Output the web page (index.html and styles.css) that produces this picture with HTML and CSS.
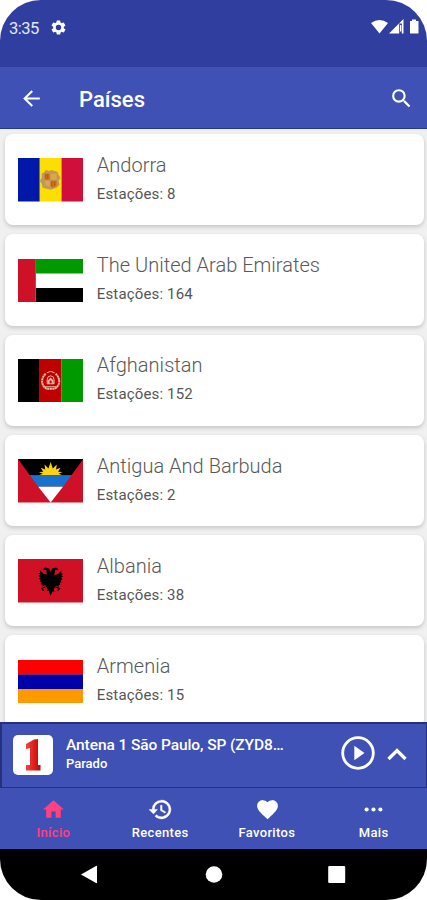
FILE: index.html
```html
<!DOCTYPE html>
<html lang="pt">
<head>
<meta charset="utf-8">
<title>Países</title>
<link rel="stylesheet" href="styles.css">
</head>
<body>
<div class="phone">
  <div class="status">
    <span class="time">3:35</span>
    <svg class="gear" viewBox="0 0 24 24"><path fill-rule="evenodd" d="M19.4 13a7.500 7.500 0 0 0 0-2l2.100-1.600a.5.5 0 0 0 .1-.6l-2-3.500a.5.5 0 0 0-.6-.2l-2.500 1a7.300 7.300 0 0 0-1.700-1l-.4-2.600a.5.500 0 0 0-.5-.5h-4a.5.500 0 0 0-.5.500L9.100 5.100a7.300 7.300 0 0 0-1.700 1l-2.500-1a.5.500 0 0 0-.6.200l-2 3.500a.5.500 0 0 0 .1.600L4.500 11a7.500 7.500 0 0 0 0 2l-2.100 1.600a.5.500 0 0 0-.1.600l2 3.500c.1.200.4.300.6.200l2.500-1a7.300 7.300 0 0 0 1.700 1l.4 2.600c0 .3.200.5.500.5h4c.3 0 .5-.2.500-.5l.4-2.600a7.300 7.300 0 0 0 1.700-1l2.500 1c.2.100.5 0 .6-.2l2-3.500a.5.500 0 0 0-.1-.6ZM12 15.800a3.800 3.800 0 1 1 0-7.600 3.800 3.800 0 0 1 0 7.600Z"/></svg>
    <svg class="signals" viewBox="0 0 50 16"><path d="M0 4Q8.500-2 17 4L8.500 14.500Z"/><path d="M18 14.500 32.500 0v14.500h-1.700V4.500h-2.600v10Z"/><path d="M29 6h1.300v6.500H29Z"/><path d="M39 2h2V.5h4V2h2.500v12.500H39Z"/></svg>
  </div>
  <header class="appbar">
    <svg class="back" viewBox="0 0 24 24"><path d="M20 11H7.830l5.590-5.590L12 4l-8 8 8 8 1.410-1.410L7.830 13H20Z"/></svg>
    <h1>Países</h1>
    <svg class="search" viewBox="0 0 24 24"><path d="M15.500 14h-.79l-.28-.27A6.471 6.471 0 0 0 16 9.500 6.500 6.500 0 1 0 9.500 16c1.610 0 3.090-.59 4.230-1.570l.27.28v.79l5 4.990L20.490 19Zm-6 0a4.500 4.500 0 1 1 0-9 4.500 4.500 0 0 1 0 9Z"/></svg>
  </header>
  <main class="list">
    <article class="card">
      <svg class="flag" viewBox="0 0 66 44" preserveAspectRatio="none"><path fill="#0018a8" d="M0 0h22v44H0z"/><path fill="#fedd00" d="M22 0h22v44H22z"/><path fill="#d0103a" d="M44 0h22v44H44z"/><path fill="#bd9a58" d="m24 16 3-2 1-2 4 1 2-1 3 1 3 1 1 3 2 3-2 3 1 4-3 3-3 1-3 1-4-1-4-1-1-4-2-3 2-3z"/><path fill="#d46b16" d="M27 16h5v6h-5zM33 23h6v5l-4 2-2-2z"/><path fill="#e0a34e" d="M33 16h6v6h-6zM27 23h5v6l-4-2z"/><path fill="none" stroke="#c7501c" d="M28 16v5M30 16v5M34 24v5M37 24v4"/></svg>
      <div><h2>Andorra</h2><p>Estações: 8</p></div>
    </article>
    <article class="card">
      <svg class="flag" viewBox="0 0 66 44" preserveAspectRatio="none"><path fill="#fff" d="M0 0h66v44H0z"/><path fill="#009a00" d="M18 0h48v14.600H18z"/><path d="M18 29.300h48V44H18z"/><path fill="#ce1126" d="M0 0h18v44H0z"/></svg>
      <div><h2>The United Arab Emirates</h2><p>Estações: 164</p></div>
    </article>
    <article class="card">
      <svg class="flag" viewBox="0 0 66 44" preserveAspectRatio="none"><path d="M0 0h22v44H0z"/><path fill="#bf0000" d="M22 0h22v44H22z"/><path fill="#090" d="M44 0h22v44H44z"/><g fill="none" stroke="#eab9a4"><path stroke-width="2" stroke-dasharray="2.200 .4" d="M28 15c-5 4-5 12 1 15h8c6-3 6-11 1-15"/><path d="M27 28h12M29 14q4-3 8 0M29.500 25v-4q0-4 3.500-4t3.500 4v4z"/><path stroke-width="2" d="M31 25v-3l2-2 2 2v3"/></g></svg>
      <div><h2>Afghanistan</h2><p>Estações: 152</p></div>
    </article>
    <article class="card">
      <svg class="flag" viewBox="0 0 66 44" preserveAspectRatio="none"><path fill="#ce1126" d="M0 0h66v44H0z"/><path d="M0 0h66L54 16.500H12z"/><path fill="#fcd116" d="m21 16.500 4-1.500-4-2 4.500-.2-2.500-4 4.500 1.800-.7-5 4 4L33 3l2.200 6.600 4-4-.7 5L43 8.800l-2.500 4 4.500.2-4 2 4 1.500z"/><path fill="#1672ce" d="M12 16.500h42L45.500 28h-25z"/><path fill="#fff" d="M20.500 28h25L33 44z"/></svg>
      <div><h2>Antigua And Barbuda</h2><p>Estações: 2</p></div>
    </article>
    <article class="card">
      <svg class="flag" viewBox="0 0 66 44" preserveAspectRatio="none"><path fill="#d01024" d="M0 0h66v44H0z"/><path d="m33 13-1.500-3.500-4-1-2.500 2 3.500.5.500 4 1.500 3L33 20l2.500-2 1.500-3 .5-4 3.500-.5-2.500-2-4 1zM30 16l-4-1-4-4 .5 3-2 .3 2 1.700-2 1 2 1.500-1.500 1.500 2 1-1 2 2 .5-1 2 2 .2-.5 2 3-1.500 1 2 1.500 1.800-1 2.500 2-.5L33 37l2-4.500 2 .5-1-2.500 1.500-1.800 1-2 3 1.500-.5-2 2-.2-1-2 2-.5-1-2 2-1-1.500-1.500 2-1.500-2-1 2-1.700-2-.3.500-3-4 4-4 1-3 3z"/><path fill="none" stroke="#000" stroke-width="1.200" d="m28 28-4 2 2 2M38 28l4 2-2 2"/></svg>
      <div><h2>Albania</h2><p>Estações: 38</p></div>
    </article>
    <article class="card">
      <svg class="flag" viewBox="0 0 66 44" preserveAspectRatio="none"><path fill="#f00" d="M0 0h66v15H0z"/><path fill="#0000a8" d="M0 14.600h66v15H0z"/><path fill="#ff9900" d="M0 29.300h66V44H0z"/></svg>
      <div><h2>Armenia</h2><p>Estações: 15</p></div>
    </article>
  </main>
  <section class="player">
    <div class="cover"><svg viewBox="0 0 40 40"><defs><linearGradient id="red" x1="0" x2="1"><stop offset="0" stop-color="#f0443c"/><stop offset=".6" stop-color="#dc1c1c"/><stop offset="1" stop-color="#a90f14"/></linearGradient></defs><path fill="url(#red)" d="M13 9 21 4.500l4-.5v26h2.500v5.500H13V30h4V13l-4 1z"/></svg></div>
    <div class="track"><strong>Antena 1 São Paulo, SP (ZYD8…</strong><span>Parado</span></div>
    <svg class="play" viewBox="0 0 34 34"><circle cx="17" cy="17" r="15.300" fill="none" stroke="#fff" stroke-width="2.800"/><path d="M13.300 9.700v14.600L23.500 17z"/></svg>
    <svg class="up" viewBox="0 0 20 14"><path d="m1.500 12 8.500-8.500 8.500 8.500" fill="none" stroke="#fff" stroke-width="3.300"/></svg>
  </section>
  <nav class="tabs">
    <a class="active"><svg viewBox="0 0 24 24"><path d="M10 20v-6h4v6h5v-8h3L12 3 2 12h3v8Z"/></svg><span>Início</span></a>
    <a><svg viewBox="0 0 24 24"><path d="M13 3a9 9 0 0 0-9 9H1l3.890 3.890.7.140L9 12H6a7 7 0 1 1 2.060 4.940l-1.420 1.420A9 9 0 1 0 13 3Zm-1 5v5l4.280 2.540.72-1.210-3.500-2.080V8Z" stroke="currentColor" stroke-width=".4"/></svg><span>Recentes</span></a>
    <a><svg class="heart" viewBox="0 0 24 24"><path d="m12 21.350-1.450-1.320C5.400 15.360 2 12.280 2 8.500A5.450 5.450 0 0 1 7.500 3C9.240 3 10.910 3.810 12 5.090 13.090 3.810 14.760 3 16.500 3A5.450 5.450 0 0 1 22 8.500c0 3.780-3.400 6.860-8.550 11.540Z"/></svg><span>Favoritos</span></a>
    <a><svg viewBox="0 0 24 24"><circle cx="5.400" cy="12" r="2"/><circle cx="12" cy="12" r="2"/><circle cx="18.600" cy="12" r="2"/></svg><span>Mais</span></a>
  </nav>
  <footer class="system">
    <svg viewBox="0 0 18 20"><path d="M0 10.500 15 2q1-.5 1 .5v16q0 1-1 .5z"/></svg>
    <svg viewBox="0 0 18 20"><circle cx="9" cy="10.500" r="8.300"/></svg>
    <svg viewBox="0 0 18 20"><rect x=".2" y="2" width="17" height="17" rx="1"/></svg>
  </footer>
</div>
</body>
</html>
```
FILE: styles.css
```css
* { box-sizing: border-box; }
body { margin: 0; background: #fff; font-family: Roboto, sans-serif; }
h1, h2, p { margin: 0; }
svg { display: block; flex: none; fill: currentColor; }

.phone {
  width: 427px;
  height: 900px;
  display: flex;
  flex-direction: column;
  overflow: hidden;
  border-radius: 41px;
  background: #f0f0f0;
  color: #fff;
}

.status {
  height: 67px;
  flex: none;
  display: flex;
  align-items: flex-start;
  padding: 19px 6px 0 9px;
  background: #303f9f;
}
.time { font-size: 16.5px; line-height: 19px; width: 41px; letter-spacing: -.5px; color: #e4e7fb; }
.gear { width: 17px; height: 17px; margin-top: -.5px; }
.signals { width: 50px; height: 16px; margin: 0 0 0 auto; }

.appbar {
  height: 62px;
  flex: none;
  display: flex;
  align-items: center;
  padding: 1px 13px 0 19px;
  background: #3f51b5;
  border-bottom: 1px solid #2138a0;
}
.back { width: 25px; height: 25px; }
.appbar h1 { margin: 3px 0 0 35px; font-size: 22px; line-height: 26px; font-weight: 500; letter-spacing: 0; }
.search { width: 25px; height: 25px; margin-left: auto; }

.list {
  flex: 1;
  min-height: 0;
  overflow: hidden;
  display: flex;
  flex-direction: column;
  gap: 9px;
  padding: 5px 3.5px 0 4.5px;
}
.card {
  height: 91.3px;
  flex: none;
  display: flex;
  align-items: flex-start;
  gap: 13.5px;
  padding: 24.3px 13px 0 13.5px;
  border-radius: 8px;
  background: #fff;
  box-shadow: 0 2px 4px rgba(0, 0, 0, .18);
}
.flag { width: 65.3px; height: 43.6px; color: #000; }
.card > div { margin-top: -5.6px; }
.card h2 { font-size: 20px; line-height: 24px; font-weight: 300; color: #585858; letter-spacing: .02px; }
.card p { margin-top: 8px; font-size: 15px; line-height: 18px; color: #555; letter-spacing: .15px; }

.player {
  height: 66px;
  flex: none;
  display: flex;
  align-items: flex-start;
  padding: 11px 19px 0 11px;
  background: #3f51b5;
  border: 2px solid #26317c;
  border-bottom-width: 1px;
  border-right-width: 1px;
}
.cover { width: 40px; height: 40px; border-radius: 5px; background: #fff; }
.track { width: 231px; margin: 0 0 0 13px; padding-top: 1px; display: flex; flex-direction: column; white-space: nowrap; }
.track strong { font-size: 15.5px; line-height: 18px; font-weight: 500; letter-spacing: -.09px; }
.track span { margin-top: 2px; font-size: 13px; line-height: 16px; font-weight: 500; }
.play { width: 34px; height: 34px; margin: 1px 0 0 44px; }
.up { width: 20px; height: 14px; margin: 12px 0 0 auto; }

.tabs { height: 61px; flex: none; display: flex; background: #3f51b5; }
.tabs a { flex: 1; display: flex; flex-direction: column; align-items: center; padding-top: 9px; }
.tabs svg { width: 25px; height: 25px; }
.tabs .heart { width: 27px; margin-left: 1px; }
.tabs span { margin-top: 3px; font-size: 13px; line-height: 16px; font-weight: 500; letter-spacing: .35px; }
.tabs .active { color: #ff4081; }

.system {
  height: 51px;
  flex: none;
  display: flex;
  justify-content: space-between;
  padding: 15px 81px 0;
  background: #000;
}
.system svg { width: 18px; height: 20px; }
```
